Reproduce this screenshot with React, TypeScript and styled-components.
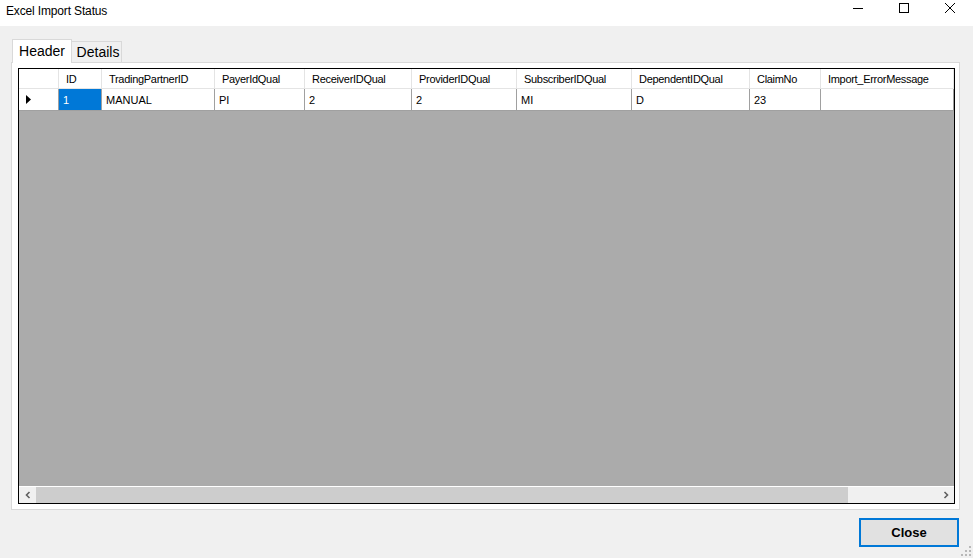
import styled, { createGlobalStyle } from "styled-components";

const GlobalStyle = createGlobalStyle`
  html, body {
    margin: 0;
    padding: 0;
    background: #f0f0f0;
  }
  * {
    box-sizing: border-box;
  }
`;

const columns = [
  { title: "", width: 40 },
  { title: "ID", width: 43 },
  { title: "TradingPartnerID", width: 113 },
  { title: "PayerIdQual", width: 90 },
  { title: "ReceiverIDQual", width: 107 },
  { title: "ProviderIDQual", width: 105 },
  { title: "SubscriberIDQual", width: 115 },
  { title: "DependentIDQual", width: 118 },
  { title: "ClaimNo", width: 71 },
  { title: "Import_ErrorMessage", width: 133 },
];

const row = ["1", "MANUAL", "PI", "2", "2", "MI", "D", "23", ""];

const template = columns.map((c) => `${c.width}px`).join(" ");

const App = () => {
  return (
    <>
      <GlobalStyle />
      <StyledWindow>
        <TitleBar>
          <Title>Excel Import Status</Title>
          <Controls>
            <ControlButton>
              <svg width="12" height="12" viewBox="0 0 12 12">
                <line x1="1" y1="6.5" x2="11" y2="6.5" stroke="#000" strokeWidth="1" />
              </svg>
            </ControlButton>
            <ControlButton>
              <svg width="12" height="12" viewBox="0 0 12 12">
                <rect x="1.5" y="1.5" width="9" height="9" fill="none" stroke="#000" strokeWidth="1" />
              </svg>
            </ControlButton>
            <ControlButton>
              <svg width="12" height="12" viewBox="0 0 12 12">
                <path d="M1 1 L11 11 M11 1 L1 11" stroke="#000" strokeWidth="1" />
              </svg>
            </ControlButton>
          </Controls>
        </TitleBar>

        <Body>
          <TabStrip>
            <Tab $active>Header</Tab>
            <Tab>Details</Tab>
          </TabStrip>
          <TabPanel>
            <Grid>
              <HeaderRow>
                {columns.map((c, i) => (
                  <HeaderCell key={i}>{c.title}</HeaderCell>
                ))}
              </HeaderRow>
              <DataRow>
                <RowHeader>
                  <svg width="5" height="9" viewBox="0 0 5 9">
                    <path d="M0 0 L5 4.5 L0 9 Z" fill="#000" />
                  </svg>
                </RowHeader>
                {row.map((v, i) => (
                  <DataCell key={i} $selected={i === 0}>
                    {v}
                  </DataCell>
                ))}
              </DataRow>
              <EmptyArea />
              <ScrollBar>
                <ScrollArrow>
                  <svg width="8" height="8" viewBox="0 0 8 8">
                    <path d="M5.5 1 L2.5 4 L5.5 7" fill="none" stroke="#606060" strokeWidth="1.6" />
                  </svg>
                </ScrollArrow>
                <ScrollTrack>
                  <ScrollThumb style={{ width: `${(812 / 901) * 100}%` }} />
                </ScrollTrack>
                <ScrollArrow>
                  <svg width="8" height="8" viewBox="0 0 8 8">
                    <path d="M2.5 1 L5.5 4 L2.5 7" fill="none" stroke="#606060" strokeWidth="1.6" />
                  </svg>
                </ScrollArrow>
              </ScrollBar>
            </Grid>
          </TabPanel>
          <Footer>
            <CloseButton>Close</CloseButton>
          </Footer>
        </Body>
        <Grip>
          <svg width="10" height="10" viewBox="0 0 10 10">
            <g fill="#b8b8b8">
              <rect x="8" y="0" width="2" height="2" />
              <rect x="4" y="4" width="2" height="2" />
              <rect x="8" y="4" width="2" height="2" />
              <rect x="0" y="8" width="2" height="2" />
              <rect x="4" y="8" width="2" height="2" />
              <rect x="8" y="8" width="2" height="2" />
            </g>
          </svg>
        </Grip>
      </StyledWindow>
    </>
  );
};

const StyledWindow = styled.div`
  position: relative;
  width: 973px;
  height: 558px;
  background: #f0f0f0;
  display: flex;
  flex-direction: column;
  overflow: hidden;
`;

const TitleBar = styled.header`
  height: 26px;
  background: #ffffff;
  display: flex;
  align-items: center;
  justify-content: space-between;
`;

const Title = styled.span`
  padding-left: 6px;
  font-family: "Liberation Sans", Arial, sans-serif;
  font-size: 12px;
  letter-spacing: -0.15px;
  color: #000;
  margin-top: -4px;
`;

const Controls = styled.div`
  display: flex;
  height: 100%;
`;

const ControlButton = styled.div`
  width: 46px;
  height: 100%;
  display: flex;
  align-items: center;
  justify-content: center;
  margin-top: -5px;
`;

const Body = styled.main`
  flex: 1;
  display: flex;
  flex-direction: column;
  padding: 13px 13px 11px 11px;
`;

const TabStrip = styled.div`
  display: flex;
  align-items: flex-end;
  height: 23px;
  padding-left: 1px;
  position: relative;
  z-index: 1;
`;

const Tab = styled.div<{ $active?: boolean }>`
  font-family: "Liberation Sans", Arial, sans-serif;
  font-size: 14px;
  color: #000;
  display: flex;
  align-items: center;
  justify-content: center;
  border: 1px solid #d9d9d9;
  border-bottom: none;
  background: ${(p) => (p.$active ? "#ffffff" : "#f0f0f0")};
  width: ${(p) => (p.$active ? "60px" : "50px")};
  height: ${(p) => (p.$active ? "24px" : "21px")};
  margin-bottom: ${(p) => (p.$active ? "-1px" : "0")};
  padding-bottom: ${(p) => (p.$active ? "2px" : "0")};
  ${(p) => (p.$active ? "" : "border-left: none; padding-left: 3px;")}
`;

const TabPanel = styled.section`
  height: 448px;
  background: #ffffff;
  border: 1px solid #d9d9d9;
  padding: 5px 5px 5px 6px;
  display: flex;
`;

const Grid = styled.div`
  flex: 1;
  border: 1px solid #000;
  display: flex;
  flex-direction: column;
  background: #ababab;
  font-family: "Liberation Sans", Arial, sans-serif;
  font-size: 11px;
  color: #000;
`;

const HeaderRow = styled.div`
  display: grid;
  grid-template-columns: ${template};
  height: 20px;
  background: #ffffff;
  border-bottom: 1px solid #e4e4e4;
`;

const HeaderCell = styled.div`
  display: flex;
  align-items: center;
  padding-left: 7px;
  letter-spacing: -0.3px;
  border-right: 1px solid #e4e4e4;
  white-space: nowrap;
  overflow: hidden;
`;

const DataRow = styled.div`
  display: grid;
  grid-template-columns: ${template};
  height: 22px;
  background: #ffffff;
  border-bottom: 1px solid #a0a0a0;
`;

const RowHeader = styled.div`
  display: flex;
  align-items: center;
  padding-left: 7px;
  border-right: 1px solid #a0a0a0;
`;

const DataCell = styled.div<{ $selected?: boolean }>`
  display: flex;
  align-items: center;
  padding-left: 4px;
  border-right: 1px solid #a0a0a0;
  background: ${(p) => (p.$selected ? "#0078d7" : "#ffffff")};
  color: ${(p) => (p.$selected ? "#ffffff" : "#000")};
  white-space: nowrap;
`;

const EmptyArea = styled.div`
  flex: 1;
`;

const ScrollBar = styled.div`
  height: 17px;
  display: flex;
  background: #f0f0f0;
  border-top: 1px solid #ffffff;
`;

const ScrollArrow = styled.div`
  width: 17px;
  display: flex;
  align-items: center;
  justify-content: center;
`;

const ScrollTrack = styled.div`
  flex: 1;
  display: flex;
`;

const ScrollThumb = styled.div`
  height: 100%;
  background: #cdcdcd;
`;

const Footer = styled.footer`
  display: flex;
  justify-content: flex-end;
  padding-top: 8px;
`;

const CloseButton = styled.button`
  width: 100px;
  height: 29px;
  margin-right: 1px;
  background: #e1e1e1;
  border: 2px solid #0078d7;
  font-family: "Liberation Sans", Arial, sans-serif;
  font-size: 13px;
  font-weight: bold;
  color: #000;
  padding: 0;
`;

const Grip = styled.div`
  position: absolute;
  right: 2px;
  bottom: 2px;
  width: 10px;
  height: 10px;
  display: flex;
`;

export default App;
